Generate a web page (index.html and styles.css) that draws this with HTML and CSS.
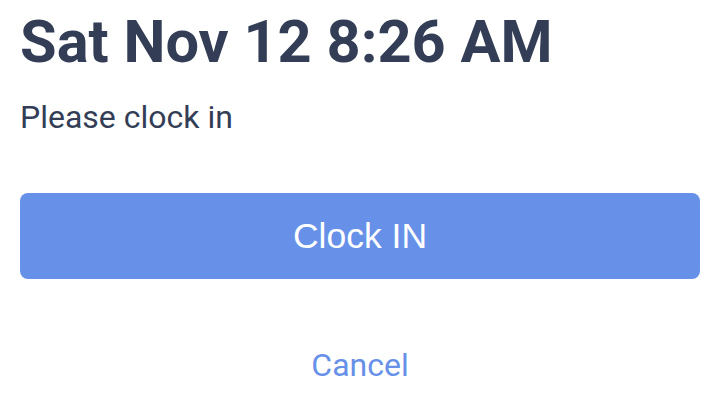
FILE: index.html
```html
<!DOCTYPE html>
<html>
<head>
<meta charset="utf-8">
<link rel="stylesheet" href="styles.css">
</head>
<body>
<div class="panel">
  <h1 class="title">Sat Nov 12 8:26 AM</h1>
  <p class="subtitle">Please clock in</p>
  <button class="btn-primary">Clock IN</button>
  <button class="btn-link">Cancel</button>
</div>
</body>
</html>
```
FILE: styles.css
```css
html, body {
  margin: 0;
  padding: 0;
  background: #ffffff;
}
.panel {
  padding: 7px 20px 0 20px;
  display: flex;
  flex-direction: column;
  font-family: Roboto, "Liberation Sans", sans-serif;
}
.title {
  margin: 0;
  font-size: 59.5px;
  line-height: 70px;
  font-weight: 700;
  color: #333e56;
}
.subtitle {
  margin: 21px 0 0 0;
  font-size: 32px;
  line-height: 38px;
  color: #333e56;
}
.btn-primary {
  margin-top: 57px;
  height: 86px;
  border: none;
  border-radius: 8px;
  background: #6790e8;
  color: #ffffff;
  font-family: "Liberation Sans", Arial, sans-serif;
  font-size: 35.5px;
  padding: 0;
}
.btn-link {
  margin-top: 67px;
  align-self: center;
  border: none;
  background: none;
  padding: 0;
  font-family: Roboto, sans-serif;
  font-size: 32px;
  line-height: 38px;
  color: #6790e8;
}
```
